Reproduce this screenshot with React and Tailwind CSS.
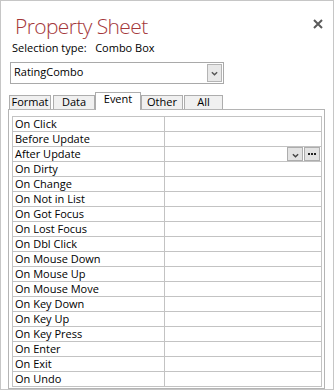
import React from "react";

const events = [
  "On Click",
  "Before Update",
  "After Update",
  "On Dirty",
  "On Change",
  "On Not in List",
  "On Got Focus",
  "On Lost Focus",
  "On Dbl Click",
  "On Mouse Down",
  "On Mouse Up",
  "On Mouse Move",
  "On Key Down",
  "On Key Up",
  "On Key Press",
  "On Enter",
  "On Exit",
  "On Undo",
];

const tabs = [
  { label: "Format", cls: "w-[42px] ml-0" },
  { label: "Data", cls: "w-[42px] ml-[2px]" },
  { label: "Event", cls: "w-[46px] ml-0", active: true },
  { label: "Other", cls: "w-[42px] ml-0" },
  { label: "All", cls: "w-[39px] ml-[1px]" },
];

const Chevron = ({ className }) => (
  <svg viewBox="0 0 8 5" className={className} fill="none">
    <path d="M1 1l3 3 3-3" stroke="currentColor" strokeWidth="1.6" />
  </svg>
);

export default function App() {
  return (
    <div className="w-[334px] h-[390px] border border-[#c6c6c6] bg-white flex flex-col font-['Open_Sans',sans-serif] text-[11px] text-black">
      <div className="flex justify-between items-start pt-[11px] pl-[14px] pr-[10px]">
        <h1 className="text-[21px] font-light leading-[28px] tracking-[-0.6px] text-[#a4373a]">
          Property Sheet
        </h1>
        <button className="mt-[7px] w-[10px] h-[10px] text-[#5a5a5a]">
          <svg viewBox="0 0 10 10" className="w-[10px] h-[10px]">
            <path d="M1 1l8 8M9 1l-8 8" stroke="currentColor" strokeWidth="2" />
          </svg>
        </button>
      </div>

      <div className="pl-[11px] leading-[16px]">
        Selection type:&nbsp;&nbsp; Combo Box
      </div>

      <div className="ml-[9px] mt-[6px] w-[214px] h-[22px] border border-[#a9a9a9] flex justify-between">
        <span className="pl-[3px] leading-[17px]">RatingCombo</span>
        <div className="mt-[1px] mr-[1px] w-[15px] h-[18px] bg-[#e8e8e8] border border-[#b4b4b4] flex items-center justify-center text-[#555]">
          <Chevron className="w-[7px] h-[5px]" />
        </div>
      </div>

      <div className="ml-[8px] mt-[8px] h-[18px] -mb-[1px] flex items-end relative z-10">
        {tabs.map((t) =>
          t.active ? (
            <div
              key={t.label}
              className={`${t.cls} h-[18px] bg-white border border-b-0 border-[#adadad] text-center leading-[11px]`}
            >
              {t.label}
            </div>
          ) : (
            <div
              key={t.label}
              className={`${t.cls} h-[14px] mb-[1px] bg-[#f0f0f0] border border-b-0 border-[#adadad] text-center leading-[11px]`}
            >
              {t.label}
            </div>
          )
        )}
      </div>

      <div className="ml-[7px] w-[317px] h-[280px] border border-[#b4b4b4] pt-[6px] pl-[3px]">
        <div className="w-[310px] border-t border-l border-r border-[#c3c3c3]">
          {events.map((e) => (
            <div key={e} className="flex h-[15px] border-b border-[#c3c3c3]">
              <div className="w-[152px] border-r border-[#c3c3c3] pl-[2px] leading-[14px]">
                {e}
              </div>
              <div className="flex-1 flex justify-end">
                {e === "After Update" && (
                  <div className="flex gap-[1px] mr-[1px]">
                    <div className="w-[16px] h-[14px] bg-[#e3e3e3] border border-[#adadad] flex items-end justify-center pb-[2px] text-[#444]">
                      <Chevron className="w-[7px] h-[5px]" />
                    </div>
                    <div className="w-[16px] h-[14px] bg-[#e3e3e3] border border-[#adadad] flex items-center justify-center gap-[1px]">
                      <span className="w-[2px] h-[2px] bg-[#222]" />
                      <span className="w-[2px] h-[2px] bg-[#222]" />
                      <span className="w-[2px] h-[2px] bg-[#222]" />
                    </div>
                  </div>
                )}
              </div>
            </div>
          ))}
        </div>
      </div>
    </div>
  );
}
